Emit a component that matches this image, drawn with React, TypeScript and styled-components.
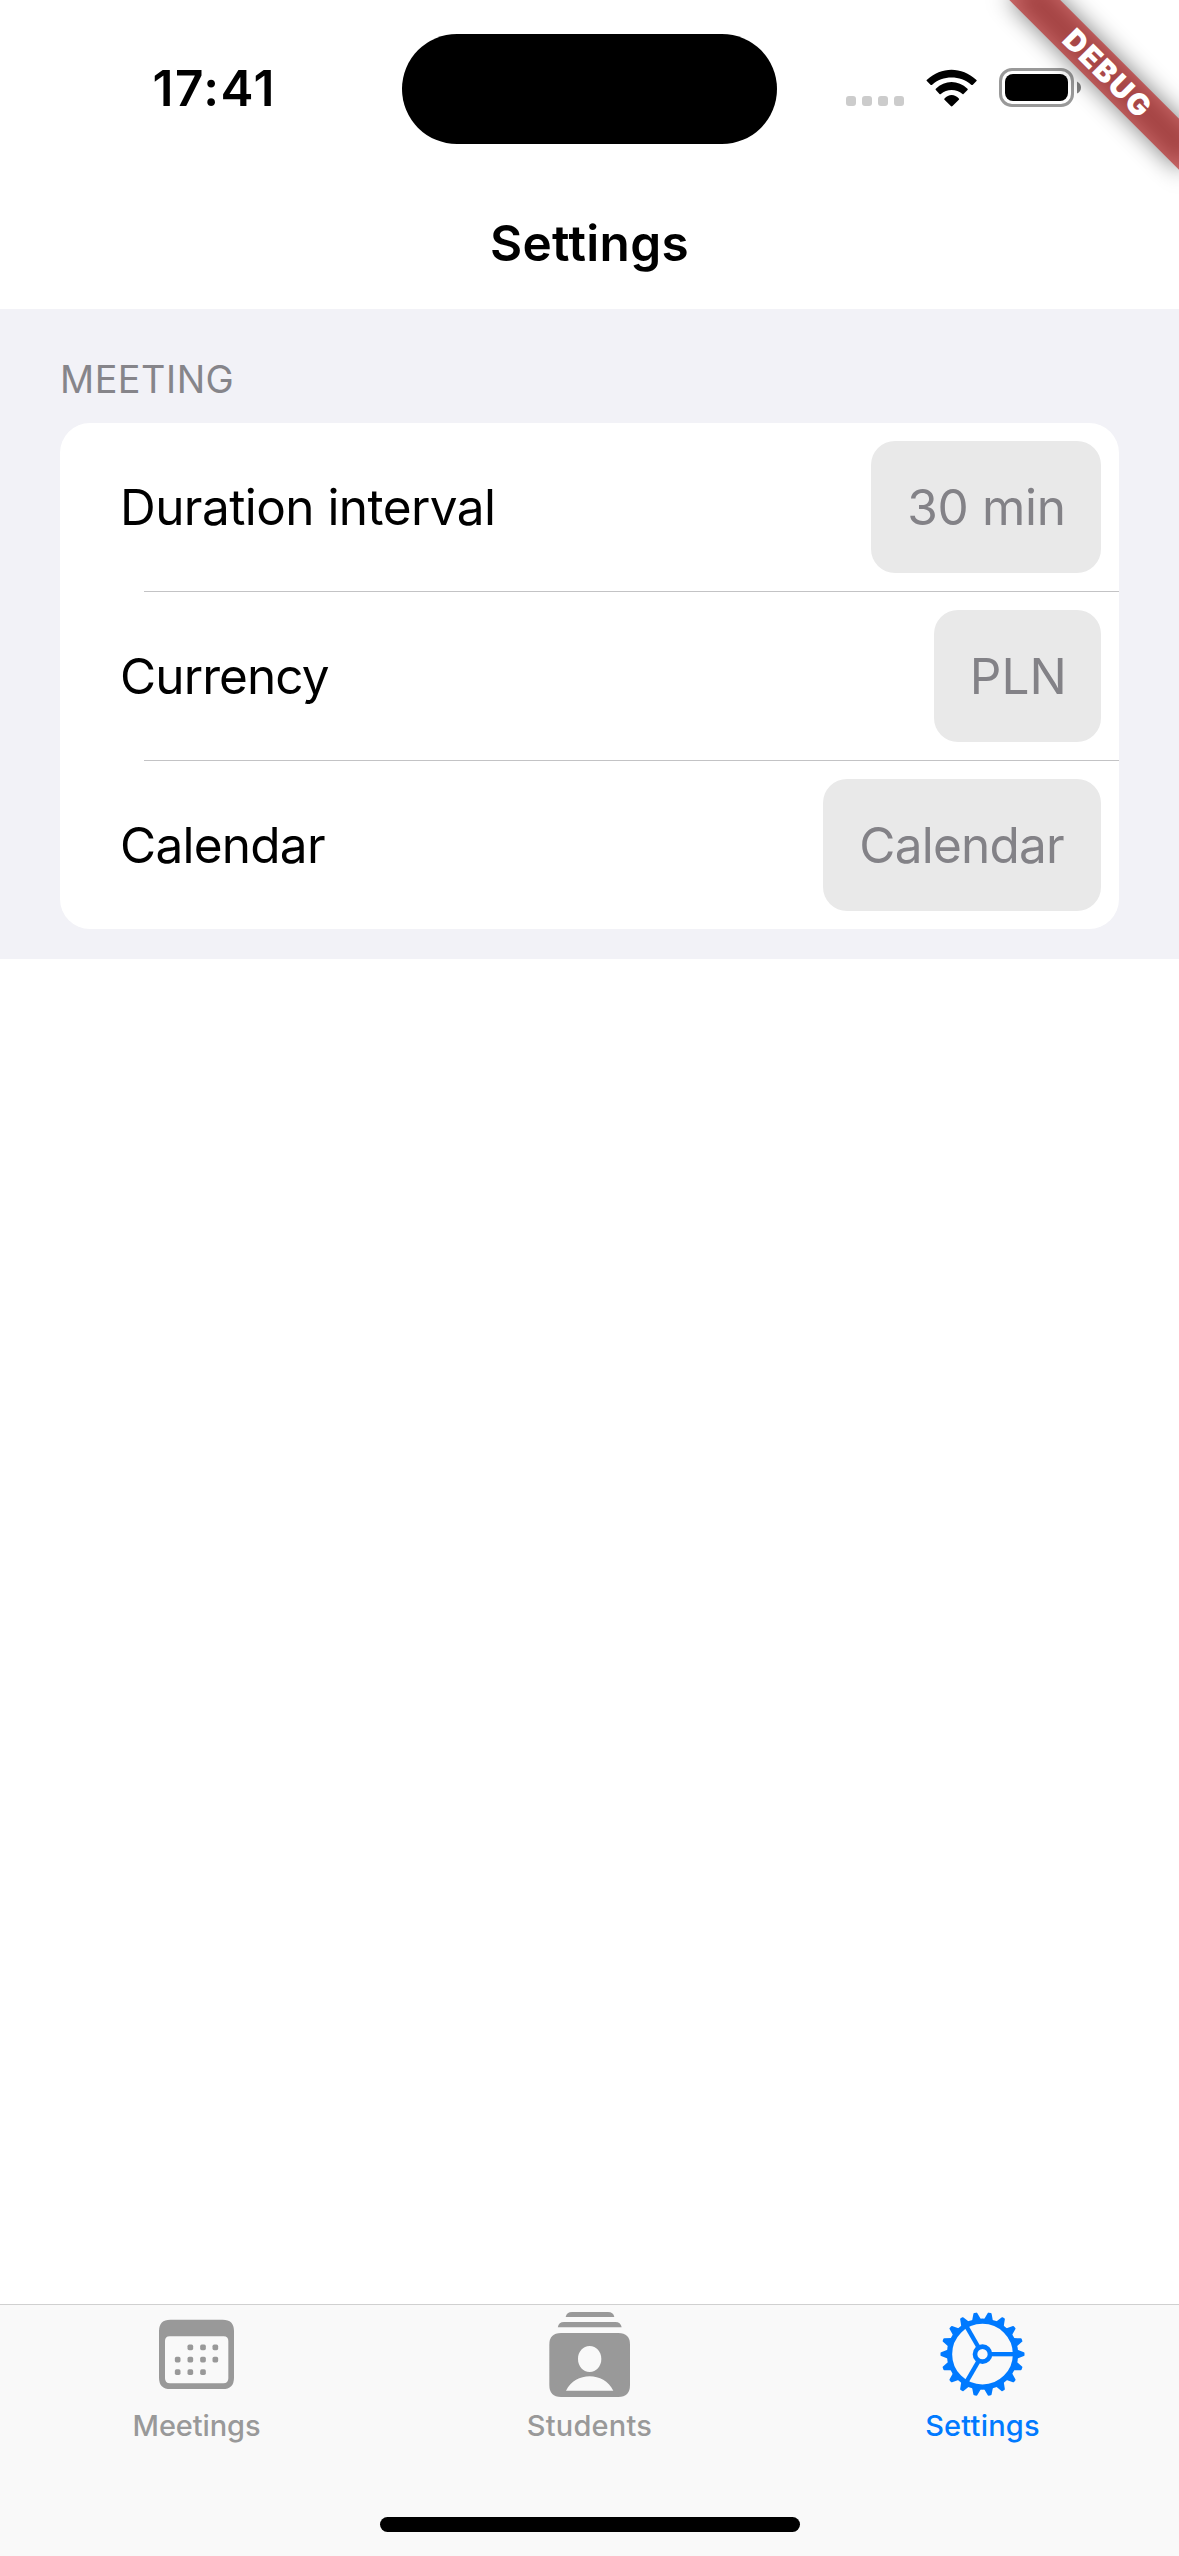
import React from 'react';
import styled, { createGlobalStyle } from 'styled-components';

const GlobalStyle = createGlobalStyle`
  * { box-sizing: border-box; }
  body { margin: 0; background: #fff; }
`;

const Screen = styled.div`
  position: relative;
  width: 1179px;
  height: 2556px;
  display: flex;
  flex-direction: column;
  overflow: hidden;
  background: #fff;
  color: #000;
  font-family: Inter, 'Liberation Sans', sans-serif;
`;

const StatusBar = styled.header`
  height: 177px;
  flex: none;
  display: grid;
  grid-template-columns: 402px 375px 1fr;
  align-items: center;
`;

const Time = styled.div`
  padding-left: 152.5px;
  margin-bottom: 2px;
  font-size: 49.5px;
  line-height: 60px;
  font-weight: 600;
  letter-spacing: 1.5px;
  white-space: nowrap;
`;

const Island = styled.div`
  height: 110px;
  margin-top: 1px;
  border-radius: 55px;
  background: #000;
`;

const Indicators = styled.div`
  height: 39px;
  margin-bottom: 2px;
  padding-left: 69px;
  display: flex;
  align-items: center;
  gap: 22px;
  svg { display: block; flex: none; }
`;

const Signal = styled.div`
  display: flex;
  gap: 6px;
  margin-top: 27px;
`;

const SignalDot = styled.span`
  width: 10px;
  height: 10px;
  border-radius: 3px;
  background: #ccc;
`;

const NavBar = styled.div`
  height: 132px;
  flex: none;
  display: flex;
  align-items: center;
  justify-content: center;
`;

const Title = styled.h1`
  margin: 0;
  font-size: 49.5px;
  line-height: 60px;
  font-weight: 600;
  letter-spacing: 0.37px;
`;

const Section = styled.section`
  flex: none;
  padding: 26px 60px 30px;
  background: #f2f2f7;
`;

const SectionHeader = styled.h2`
  margin: 0;
  height: 88px;
  display: flex;
  align-items: center;
  font-size: 37.8px;
  font-weight: 400;
  letter-spacing: 0.5px;
  color: #86858a;
`;

const Card = styled.div`
  border-radius: 30px;
  background: #fff;
`;

const Divider = styled.div`
  height: 1px;
  margin-left: 84px;
  background: #c3c3c5;
`;

const Row = styled.div`
  height: 168px;
  padding: 0 18px 0 60px;
  display: flex;
  align-items: center;
  justify-content: space-between;
  font-size: 49.5px;
  line-height: 60px;
  white-space: nowrap;
`;

const RowLabel = styled.span<{ $tracking: number }>`
  letter-spacing: ${(p) => p.$tracking}px;
`;

const ValueButton = styled.button<{ $width: number; $tracking: number }>`
  width: ${(p) => p.$width}px;
  height: 132px;
  padding: 0 0 0 36px;
  border: 0;
  border-radius: 24px;
  background: #e9e9e9;
  color: #838287;
  font: inherit;
  text-align: left;
  letter-spacing: ${(p) => p.$tracking}px;
`;

const TabBar = styled.footer`
  height: 252px;
  flex: none;
  margin-top: auto;
  padding: 4px 0 24px;
  display: flex;
  flex-direction: column;
  align-items: center;
  justify-content: space-between;
  border-top: 1px solid #d0d0d0;
  background: #f9f9f9;
`;

const Tabs = styled.nav`
  width: 100%;
  display: grid;
  grid-template-columns: repeat(3, 1fr);
`;

const Tab = styled.div<{ $active?: boolean; $tracking: number }>`
  display: flex;
  flex-direction: column;
  align-items: center;
  gap: 9px;
  font-size: 29px;
  line-height: 36px;
  font-weight: 450;
  letter-spacing: ${(p) => p.$tracking}px;
  color: ${(p) => (p.$active ? '#007aff' : '#999')};
  svg { display: block; }
`;

const HomeIndicator = styled.div`
  width: 420px;
  height: 15px;
  border-radius: 8px;
  background: #000;
`;

/* Corner ribbon: laid over the status bar, rotated around the top right corner */
const RibbonShadow = styled.div`
  position: absolute;
  top: 84px;
  left: 1059px;
  width: 240px;
  height: 36px;
  transform: rotate(45deg);
  transform-origin: 120px -84px;
  background: rgba(0, 0, 0, 0.5);
  filter: blur(11.5px);
`;

const Ribbon = styled.div`
  position: absolute;
  top: 84px;
  left: 1059px;
  width: 240px;
  height: 36px;
  padding-left: 3px;
  transform: rotate(45deg);
  transform-origin: 120px -84px;
  display: flex;
  align-items: center;
  justify-content: center;
  background: rgba(183, 28, 28, 0.627);
  color: #fff;
  font-size: 29.7px;
  line-height: 36px;
  font-weight: 900;
  letter-spacing: 1.7px;
`;

const WifiIcon = () => (
  <svg width="51" height="38" viewBox="737.5 205 153 114" fill="#000">
    <path d="M740 241 Q738 239 740.5 237 C783 197 845 197 888 237 Q891 239 889 241 L878 252 Q876 254 873 252 C841 223 787 223 756 252 Q753 254 751 252Z" />
    <path d="M767 268 Q765 266 767 264 C794 237 834 237 862 264 Q864 266 862 268 L850 280 Q849 281.500 847 280 C829 264 800 264 782 280 Q780 281.500 778 280Z" />
    <path d="M793 297.500 Q791 295.500 793 293.500 C805 279 824 279 836 293.500 Q838 295.500 836 297.500 L817 316 Q814.500 318.500 812 316Z" />
  </svg>
);

const BatteryIcon = () => (
  <svg width="83" height="39" viewBox="0 0 83 39">
    <rect x="1.5" y="1.500" width="72" height="36" rx="11.5" fill="none" stroke="#999" strokeWidth="3" />
    <rect x="6" y="6" width="63" height="27" rx="8" fill="#000" />
    <path d="M78 13.500 Q82 15.500 82 19.500 Q82 23.500 78 25.500Z" fill="#808080" />
  </svg>
);

const calendarDots = [
  [241, 172], [279, 172], [316, 172],
  [203, 209], [241, 209], [279, 209], [316, 209],
  [203, 246.5], [241, 246.5], [279, 246.5],
];

const MeetingsIcon = () => (
  <svg width="90" height="90" viewBox="126 57 270 270" fill="currentColor">
    <path
      fillRule="evenodd"
      d="M181 89H338Q372 89 372 123V263Q372 297 338 297H181Q147 297 147 263V123Q147 89 181 89Z M179 139Q165 139 165 153V265Q165 280 180 280H340Q355 280 355 265V153Q355 139 341 139Z"
    />
    {calendarDots.map(([x, y]) => (
      <rect key={`${x}-${y}`} x={x - 8.5} y={y - 8.5} width="17" height="17" rx="5" />
    ))}
  </svg>
);

const StudentsIcon = () => (
  <svg width="90" height="90" viewBox="135 57 270 270" fill="currentColor">
    <path d="M197 81Q200 66 216 66H324Q340 66 343 81Z" />
    <path d="M173.500 111.500Q176 96 192 96H346Q362 96 365 111.500Z" />
    <path
      fillRule="evenodd"
      d="M183 129H355Q390 129 390 164V285Q390 321 355 321H183Q148 321 148 285V164Q148 129 183 129Z M269 168C249 168 234 185 234 207C234 229 249 246 269 246C289 246 304 229 304 207C304 185 289 168 269 168Z M198 302.500H340C325 273 298 259 269 259C240 259 213 273 198 302.500Z"
    />
  </svg>
);

const SettingsIcon = () => (
  <svg width="90" height="90" viewBox="114 57 270 270" fill="currentColor" stroke="currentColor">
    <g transform="translate(247.5 192.500)">
      <circle r="99" fill="none" strokeWidth="16" />
      <circle r="22.5" fill="none" strokeWidth="14" />
      {[0, 120, 240].map((a) => (
        <path key={a} d="M24 0H98" strokeWidth="13" transform={`rotate(${a})`} />
      ))}
      {Array.from({ length: 18 }, (_, i) => (
        <path
          key={i}
          d="M102 -11L123 -3V3L102 11Z"
          strokeWidth="6"
          strokeLinejoin="round"
          transform={`rotate(${i * 20})`}
        />
      ))}
    </g>
  </svg>
);

const settings = [
  { label: 'Duration interval', tracking: -0.56, value: '30 min', width: 229.7, valueTracking: -0.35 },
  { label: 'Currency', tracking: -0.9, value: 'PLN', width: 167.2, valueTracking: 0 },
  { label: 'Calendar', tracking: -0.75, value: 'Calendar', width: 277.7, valueTracking: -0.78 },
];

export default function App() {
  return (
    <Screen>
      <GlobalStyle />
      <StatusBar>
        <Time>17:41</Time>
        <Island />
        <Indicators>
          <Signal>
            <SignalDot />
            <SignalDot />
            <SignalDot />
            <SignalDot />
          </Signal>
          <WifiIcon />
          <BatteryIcon />
        </Indicators>
      </StatusBar>
      <NavBar>
        <Title>Settings</Title>
      </NavBar>
      <Section>
        <SectionHeader>MEETING</SectionHeader>
        <Card>
          {settings.map((s, i) => (
            <React.Fragment key={s.label}>
              {i > 0 && <Divider />}
              <Row>
                <RowLabel $tracking={s.tracking}>{s.label}</RowLabel>
                <ValueButton $width={s.width} $tracking={s.valueTracking}>
                  {s.value}
                </ValueButton>
              </Row>
            </React.Fragment>
          ))}
        </Card>
      </Section>
      <TabBar>
        <Tabs>
          <Tab $tracking={-0.1}>
            <MeetingsIcon />
            Meetings
          </Tab>
          <Tab $tracking={0.2}>
            <StudentsIcon />
            Students
          </Tab>
          <Tab $active $tracking={0.2}>
            <SettingsIcon />
            Settings
          </Tab>
        </Tabs>
        <HomeIndicator />
      </TabBar>
      <RibbonShadow />
      <Ribbon>DEBUG</Ribbon>
    </Screen>
  );
}
